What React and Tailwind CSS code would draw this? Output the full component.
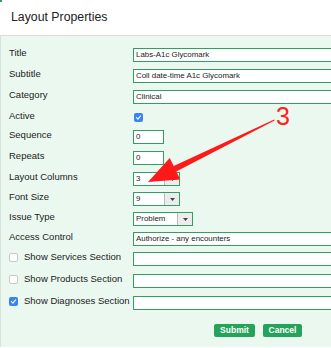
import React from "react";

const labelFont = { fontFamily: '"Liberation Sans", Arial, sans-serif' };

const Check = ({ checked }) =>
  checked ? (
    <span className="flex h-[9px] w-[9px] items-center justify-center rounded-[2px] bg-[#3a82f6]">
      <svg width="7" height="7" viewBox="0 0 10 10">
        <path d="M2 5.2 L4.2 7.4 L8 2.8" fill="none" stroke="white" strokeWidth="1.6" strokeLinecap="round" strokeLinejoin="round" />
      </svg>
    </span>
  ) : (
    <span className="block h-[9px] w-[9px] rounded-[2px] border border-[#c9c9c9] bg-white" />
  );

const TextBox = ({ value = "", width = "w-[220px]" }) => (
  <div className={`flex h-[14px] shrink-0 items-center border border-[#2fa062] bg-white pl-[2px] text-[7.9px] text-[#222] ${width}`}>
    {value}
  </div>
);

const SelectBox = ({ value, width, btn }) => (
  <div className={`flex h-[14px] shrink-0 border border-[#2fa062] bg-white text-[7.9px] text-[#222] ${width}`}>
    <div className="flex flex-1 items-center pl-[2px]">{value}</div>
    <div className={`flex items-center justify-center border-l border-[#bbb] bg-[#ececec] ${btn}`}>
      <svg width="5" height="3" viewBox="0 0 5 3">
        <path d="M0 0 L5 0 L2.5 3 Z" fill="#444" />
      </svg>
    </div>
  </div>
);

const Row = ({ label, h, check, children }) => (
  <div className={`flex items-start ${h}`}>
    <div className="flex w-[124px] shrink-0 items-center gap-[6px] leading-[14px] -mt-[2px]">
      {check !== undefined && (
        <span className="mt-[1px]">
          <Check checked={check} />
        </span>
      )}
      <span>{label}</span>
    </div>
    {children}
  </div>
);

export default function App() {
  return (
    <div className="relative h-[348px] w-[331px] overflow-hidden bg-white text-[#222]" style={labelFont}>
      <div className="absolute left-0 top-0 h-[2px] w-[2px] bg-[#2fa062]" />
      <div className="flex h-[36px] items-center border-b border-[#dcdcdc] pl-[11px] text-[12.3px]">
        Layout Properties
      </div>

      <div className="h-[311px] border-l border-[#d5e3da] bg-[#eaf8ef] pl-[8px] pt-[12px] text-[9.5px]">
        <Row label="Title" h="h-[21px]">
          <TextBox value="Labs-A1c Glycomark" />
        </Row>
        <Row label="Subtitle" h="h-[21px]">
          <TextBox value="Coll date-time A1c Glycomark" />
        </Row>
        <Row label="Category" h="h-[21px]">
          <TextBox value="Clinical" />
        </Row>
        <Row label="Active" h="h-[19px]">
          <span className="ml-[1px] mt-[2px]">
            <Check checked />
          </span>
        </Row>
        <Row label="Sequence" h="h-[21px]">
          <TextBox value="0" width="w-[31px]" />
        </Row>
        <Row label="Repeats" h="h-[21px]">
          <TextBox value="0" width="w-[31px]" />
        </Row>
        <Row label="Layout Columns" h="h-[20px]">
          <SelectBox value="3" width="w-[47px]" btn="w-[15px]" />
        </Row>
        <Row label="Font Size" h="h-[20px]">
          <SelectBox value="9" width="w-[47px]" btn="w-[15px]" />
        </Row>
        <Row label="Issue Type" h="h-[20px]">
          <SelectBox value="Problem" width="w-[60px]" btn="w-[15px]" />
        </Row>
        <Row label="Access Control" h="h-[20px]">
          <TextBox value="Authorize - any encounters" />
        </Row>
        <Row label="Show Services Section" h="h-[22px]" check={false}>
          <TextBox />
        </Row>
        <Row label="Show Products Section" h="h-[22px]" check={false}>
          <TextBox />
        </Row>
        <Row label="Show Diagnoses Section" h="h-[28px]" check>
          <TextBox />
        </Row>

        <div className="flex gap-[8px] pl-[205px]">
          <button className="h-[13px] w-[41px] rounded-[2px] bg-[#26a35b] text-[8.5px] font-bold leading-[13px] text-white">
            Submit
          </button>
          <button className="h-[13px] w-[39px] rounded-[2px] bg-[#26a35b] text-[8.5px] font-bold leading-[13px] text-white">
            Cancel
          </button>
        </div>
      </div>

      {/* annotation */}
      <svg className="pointer-events-none absolute left-0 top-0" width="331" height="348">
        <polygon
          points="148,182 169.7,157.9 173.7,166 274.2,119.4 274.6,120.4 176.3,171.4 180.3,179.5"
          fill="#ff1a1a"
        />
      </svg>
      <div className="absolute left-[276px] top-[101px] text-[25px] leading-[30px] text-[#ff2020]">3</div>
    </div>
  );
}
